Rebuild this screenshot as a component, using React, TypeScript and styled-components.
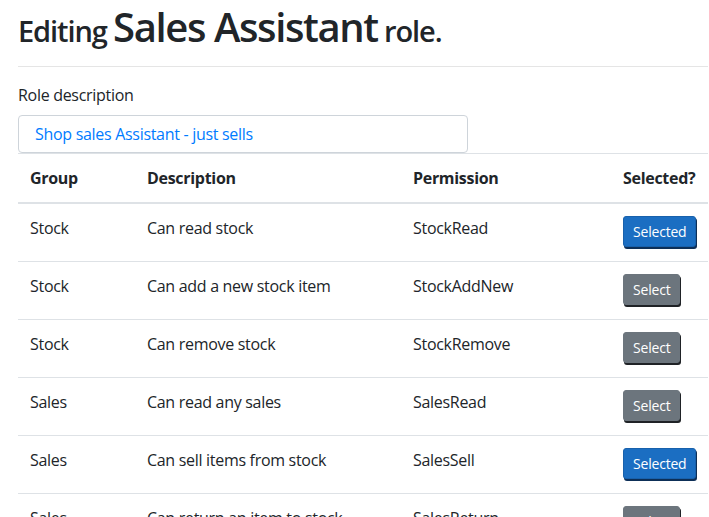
import { createGlobalStyle, styled } from 'styled-components';

const GlobalStyle = createGlobalStyle`
  html, body {
    margin: 0;
    padding: 0;
    background: #fff;
  }
  body {
    font-family: "Open Sans", "Noto Sans", "Liberation Sans", sans-serif;
    color: #212529;
    font-size: 16px;
    line-height: 1.5;
  }
  * {
    box-sizing: border-box;
  }
`;

const Page = styled.main`
  padding: 0 1px 0 18px;
`;

const Title = styled.h2`
  margin: 0;
  padding-top: 4px;
  font-size: 29px;
  font-weight: 600;
  line-height: 46px;
  letter-spacing: -1.1px;
  color: #212529;
`;

const RoleName = styled.span`
  font-size: 40px;
  letter-spacing: -1.4px;
`;

const Divider = styled.hr`
  margin: 12px 0 16px;
  border: 0;
  border-top: 1px solid rgba(0, 0, 0, 0.1);
`;

const Label = styled.label`
  display: block;
  margin-bottom: 8px;
  letter-spacing: -0.3px;
`;

const TextInput = styled.input`
  display: block;
  width: 450px;
  height: 38px;
  padding: 0 16px;
  border: 1px solid #ced4da;
  border-radius: 4px;
  font: inherit;
  letter-spacing: -0.3px;
  color: #007bff;
  background: #fff;
  outline: none;
`;

const Table = styled.table`
  width: 100%;
  border-collapse: collapse;
  table-layout: fixed;
  letter-spacing: -0.3px;
`;

const HeadCell = styled.th<{ $w: number }>`
  width: ${(p) => p.$w}px;
  padding: 12px;
  text-align: left;
  font-weight: 700;
  vertical-align: bottom;
  border-top: 1px solid #dee2e6;
  border-bottom: 2px solid #dee2e6;
`;

const Cell = styled.td`
  padding: 12px;
  vertical-align: top;
  border-top: 1px solid #dee2e6;
`;

const ToggleButton = styled.button<{ $on: boolean }>`
  display: inline-block;
  vertical-align: top;
  height: 31px;
  margin-bottom: 2px;
  padding: 0 9px;
  font-family: inherit;
  font-size: 14px;
  line-height: 29px;
  letter-spacing: -0.2px;
  color: #fff;
  border-radius: 3px;
  border: 1px solid ${(p) => (p.$on ? '#1861ac' : '#6c757d')};
  background: ${(p) => (p.$on ? '#1b6ec2' : '#6c757d')};
  box-shadow: 1px 2px 0 ${(p) => (p.$on ? '#0d2f57' : '#1f2226')};
  cursor: pointer;
`;

const columns = [
  { name: 'Group', w: 117 },
  { name: 'Description', w: 266 },
  { name: 'Permission', w: 210 },
  { name: 'Selected?', w: 97 },
];

const permissions = [
  { group: 'Stock', desc: 'Can read stock', perm: 'StockRead', on: true },
  { group: 'Stock', desc: 'Can add a new stock item', perm: 'StockAddNew', on: false },
  { group: 'Stock', desc: 'Can remove stock', perm: 'StockRemove', on: false },
  { group: 'Sales', desc: 'Can read any sales', perm: 'SalesRead', on: false },
  { group: 'Sales', desc: 'Can sell items from stock', perm: 'SalesSell', on: true },
  { group: 'Sales', desc: 'Can return an item to stock', perm: 'SalesReturn', on: false },
];

const App = () => {
  return (
    <>
      <GlobalStyle />
      <Page>
        <Title>
          Editing <RoleName>Sales Assistant</RoleName> role.
        </Title>
        <Divider />
        <Label htmlFor="role-desc">Role description</Label>
        <TextInput id="role-desc" defaultValue="Shop sales Assistant - just sells" />
        <Table>
          <thead>
            <tr>
              {columns.map((c) => (
                <HeadCell key={c.name} $w={c.w}>
                  {c.name}
                </HeadCell>
              ))}
            </tr>
          </thead>
          <tbody>
            {permissions.map((p) => (
              <tr key={p.perm}>
                <Cell>{p.group}</Cell>
                <Cell>{p.desc}</Cell>
                <Cell>{p.perm}</Cell>
                <Cell>
                  <ToggleButton $on={p.on}>{p.on ? 'Selected' : 'Select'}</ToggleButton>
                </Cell>
              </tr>
            ))}
          </tbody>
        </Table>
      </Page>
    </>
  );
};

export default App;
